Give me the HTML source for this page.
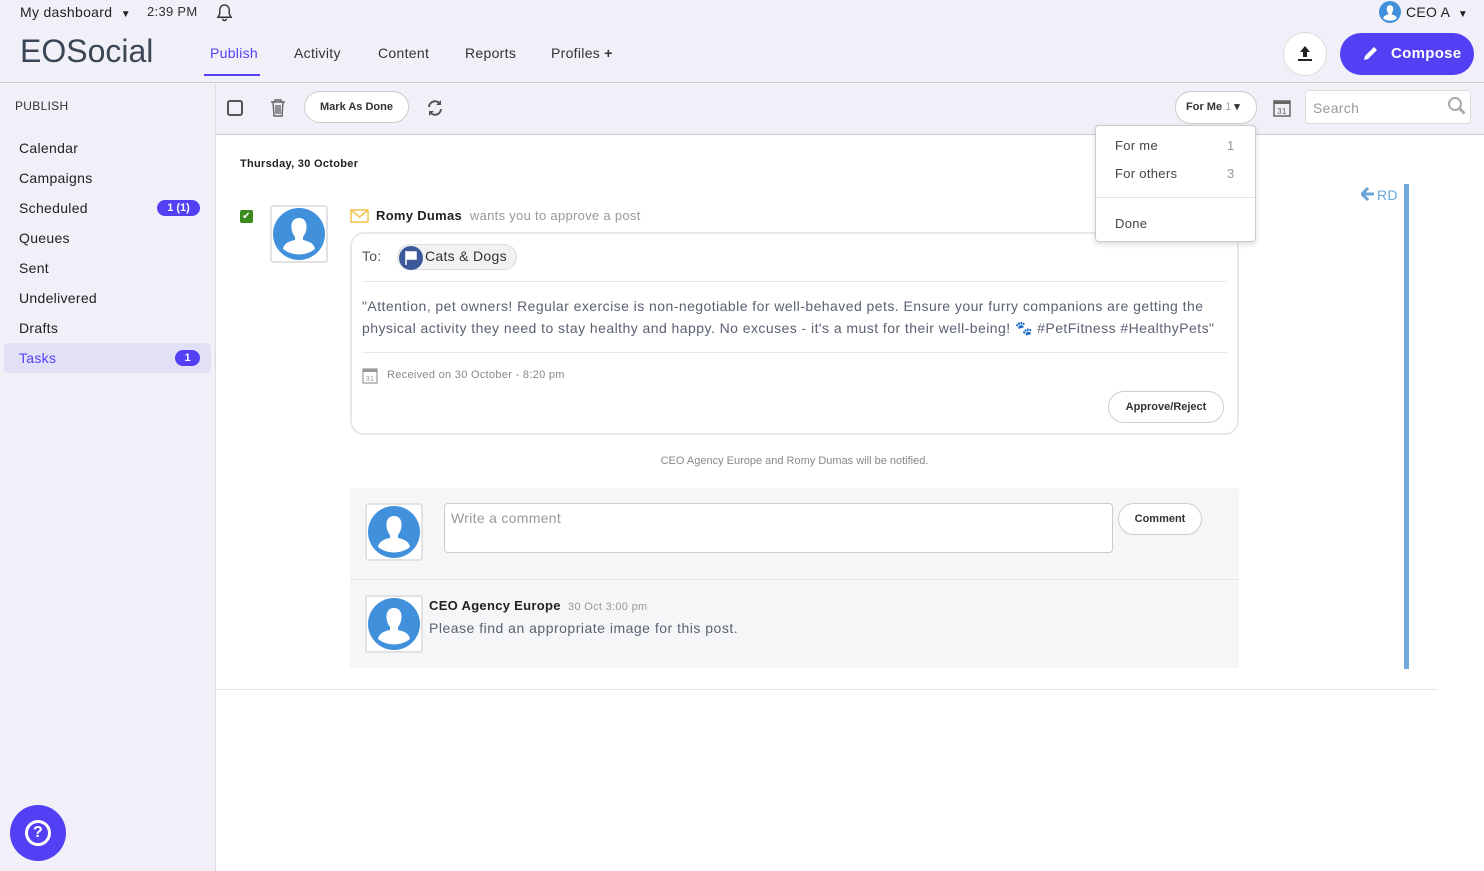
<!DOCTYPE html>
<html><head><meta charset="utf-8"><style>
*{box-sizing:border-box;margin:0;padding:0}
body{width:1484px;height:871px;overflow:hidden;font-family:"Liberation Sans",sans-serif;background:#f1f0f8;position:relative;color:#222;letter-spacing:0.3px}
.a{position:absolute}
.nav{font-size:14px;color:#333;top:45px}
.side div{position:absolute;left:19px;font-size:14px;color:#222}
.badge{position:absolute;background:#5340f5;color:#fff;font-size:11px;font-weight:bold;border-radius:9px;height:16px;line-height:16px;text-align:center;letter-spacing:0}
.av{position:absolute;width:58px;height:58px;border:2px solid #e2e2e2;border-radius:3px;background:#fff;display:flex;align-items:center;justify-content:center}
.btn{position:absolute;border:1px solid #ccc;border-radius:16px;background:#fff;font-size:12px;font-weight:bold;color:#333;text-align:center;letter-spacing:0}
</style></head><body>
<svg width="0" height="0" style="position:absolute"><defs><symbol id="av" viewBox="0 0 52 52"><circle cx="26" cy="26" r="26" fill="#4190dc"/><path d="M26 10c-6 0-8 5-7.5 10 .3 4 2 7 3.5 9v3c-5 1-11 3-12 9a26 26 0 0 0 32 0c-1-6-7-8-12-9v-3c1.5-2 3.2-5 3.5-9 .5-5-1.5-10-7.5-10z" fill="#fff"/></symbol></defs></svg>

<div class="a" style="left:20px;top:4px;font-size:14px;color:#222">My dashboard &nbsp;<span style="font-size:10px">▼</span></div>
<div class="a" style="left:147px;top:4px;font-size:13px;color:#333">2:39 PM</div>
<svg class="a" style="left:215px;top:3px" width="19" height="19" viewBox="0 0 20 20"><path d="M10 2c-3 0-5 2.5-5 5.5v4L3 15h14l-2-3.5v-4C15 4.5 13 2 10 2zM8 16.5a2 2 0 0 0 4 0" fill="none" stroke="#333" stroke-width="1.5"/></svg>
<div class="a" style="left:20px;top:33px;font-size:32px;color:#3a4656;letter-spacing:0">EOSocial</div>
<div class="a nav" style="left:210px;color:#5340f5">Publish</div>
<div class="a" style="left:204px;top:74px;width:56px;height:2px;background:#5340f5"></div>
<div class="a nav" style="left:294px">Activity</div>
<div class="a nav" style="left:378px">Content</div>
<div class="a nav" style="left:465px">Reports</div>
<div class="a nav" style="left:551px">Profiles <b>+</b></div>
<svg class="a" style="left:1379px;top:1px" width="22" height="22"><use href="#av"/></svg>
<div class="a" style="left:1406px;top:4px;font-size:14px;color:#222">CEO A &nbsp;<span style="font-size:10px">▼</span></div>
<div class="a" style="left:1283px;top:32px;width:44px;height:44px;border-radius:50%;background:#fff;border:1px solid #ddd"></div>
<svg class="a" style="left:1296px;top:44px" width="18" height="18" viewBox="0 0 18 18"><path d="M9 2l-5 6h3v5h4V8h3z M2 15h14v2H2z" fill="#222"/></svg>
<div class="a" style="left:1340px;top:33px;width:134px;height:42px;border-radius:21px;background:#5340f5;color:#fff;font-size:15px;font-weight:bold;line-height:42px;padding-left:51px">Compose</div>
<svg class="a" style="left:1362px;top:44px" width="18" height="18" viewBox="0 0 18 18"><path d="M2 16l1-4 9-9 3 3-9 9z" fill="#fff"/></svg>
<div class="a" style="left:0;top:82px;width:1484px;height:1px;background:#ccc"></div>

<div class="a" style="left:215px;top:83px;width:1px;height:788px;background:#ddd"></div>
<div class="a" style="left:15px;top:99px;font-size:12px;color:#333">PUBLISH</div>
<div class="side">
<div style="top:140px">Calendar</div><div style="top:170px">Campaigns</div><div style="top:200px">Scheduled</div>
<div style="top:230px">Queues</div><div style="top:260px">Sent</div><div style="top:290px">Undelivered</div><div style="top:320px">Drafts</div>
</div>
<div class="a" style="left:4px;top:343px;width:207px;height:30px;border-radius:4px;background:#e2e0f7"></div>
<div class="a" style="left:19px;top:350px;font-size:14px;color:#5340f5">Tasks</div>
<div class="badge" style="left:157px;top:200px;width:43px">1 (1)</div>
<div class="badge" style="left:175px;top:350px;width:25px">1</div>
<div class="a" style="left:10px;top:805px;width:56px;height:56px;border-radius:50%;background:#5340f5"></div>
<div class="a" style="left:25px;top:820px;width:26px;height:26px;border-radius:50%;border:3px solid #fff;color:#fff;font-weight:bold;font-size:16px;text-align:center;line-height:20px">?</div>

<div class="a" style="left:216px;top:134px;width:1268px;height:737px;background:#fff"></div>
<div class="a" style="left:216px;top:134px;width:1268px;height:1px;background:#ccc"></div>
<div class="a" style="left:227px;top:100px;width:16px;height:16px;border:2px solid #555;border-radius:3px"></div>
<svg class="a" style="left:269px;top:98px" width="18" height="20" viewBox="0 0 18 20"><path d="M2 4h14M6 4V2h6v2M4 4l1 14h8l1-14M7 7v9M9 7v9M11 7v9" fill="none" stroke="#666" stroke-width="1.4"/></svg>
<div class="btn" style="left:304px;top:91px;width:105px;height:32px;line-height:30px;font-size:11px">Mark As Done</div>
<svg class="a" style="left:425px;top:98px" width="20" height="20" viewBox="0 0 20 20"><path d="M4 9a6 6 0 0 1 11-3M16 11a6 6 0 0 1-11 3" fill="none" stroke="#555" stroke-width="2"/><path d="M16 2v5h-5zM4 18v-5h5z" fill="#555"/></svg>
<div class="btn" style="left:1175px;top:91px;width:82px;height:33px;line-height:31px;font-size:11px;text-align:left;padding-left:10px">For Me <span style="color:#aaa;font-weight:normal">1</span> ▾</div>
<svg class="a" style="left:1272px;top:98px" width="20" height="20" viewBox="0 0 20 20"><rect x="2" y="3" width="16" height="15" fill="none" stroke="#666" stroke-width="1.5"/><rect x="2" y="3" width="16" height="3" fill="#666"/><text x="10" y="16" font-size="8" text-anchor="middle" fill="#666" font-family="Liberation Sans">31</text></svg>
<div class="a" style="left:1305px;top:90px;width:166px;height:34px;border:1px solid #ddd;border-radius:4px;background:#fff;font-size:14px;color:#999;padding:9px 7px">Search</div>
<svg class="a" style="left:1447px;top:96px" width="20" height="20" viewBox="0 0 20 20"><circle cx="8" cy="8" r="6" fill="none" stroke="#aaa" stroke-width="2"/><path d="M12.5 12.5l5 5" stroke="#aaa" stroke-width="3"/></svg>

<div class="a" style="left:240px;top:158px;font-size:11px;font-weight:bold;color:#222">Thursday, 30 October</div>
<div class="a" style="left:240px;top:210px;width:13px;height:13px;background:#3a8a1e;border-radius:2px;color:#fff;font-size:10px;text-align:center;line-height:13px">✔</div>
<div class="av" style="left:270px;top:205px"><svg width="52" height="52"><use href="#av"/></svg></div>
<svg class="a" style="left:350px;top:209px" width="19" height="14" viewBox="0 0 19 14"><rect x="1" y="1" width="17" height="12" fill="none" stroke="#f3c24a" stroke-width="1.5"/><path d="M1 1l8.5 7L18 1" fill="none" stroke="#f3c24a" stroke-width="1.5"/></svg>
<div class="a" style="left:376px;top:208px;font-size:13px"><b>Romy Dumas</b> <span style="color:#999">&nbsp;wants you to approve a post</span></div>
<div class="a" style="left:350px;top:232px;width:889px;height:203px;border:2px solid #e6e8ee;border-radius:14px;background:#fff"></div>
<div class="a" style="left:362px;top:248px;font-size:14px;color:#555">To:</div>
<div class="a" style="left:397px;top:244px;width:120px;height:26px;border-radius:13px;background:#f2f2f4;border:1px solid #ddd"></div>
<div class="a" style="left:399px;top:246px;width:24px;height:24px;border-radius:50%;background:#3b5998"></div>
<svg class="a" style="left:404px;top:250px" width="14" height="16" viewBox="0 0 14 16"><path d="M2 1v14M2 2h10v7H2" fill="#fff" stroke="#fff" stroke-width="1.5"/></svg>
<div class="a" style="left:425px;top:248px;font-size:14px;color:#333">Cats &amp; Dogs</div>
<div class="a" style="left:362px;top:281px;width:865px;height:1px;background:#e6e8ee"></div>
<div class="a" style="left:362px;top:295px;width:870px;font-size:14px;line-height:22px;color:#5a6272;letter-spacing:0.45px">"Attention, pet owners! Regular exercise is non-negotiable for well-behaved pets. Ensure your furry companions are getting the physical activity they need to stay healthy and happy. No excuses - it's a must for their well-being! 🐾 #PetFitness #HealthyPets"</div>
<div class="a" style="left:362px;top:352px;width:865px;height:1px;background:#e6e8ee"></div>
<svg class="a" style="left:362px;top:367px" width="16" height="17" viewBox="0 0 16 17"><rect x="1" y="2" width="14" height="14" fill="none" stroke="#999" stroke-width="1.2"/><rect x="1" y="2" width="14" height="3" fill="#999"/><text x="8" y="14" font-size="7" text-anchor="middle" fill="#999" font-family="Liberation Sans">31</text></svg>
<div class="a" style="left:387px;top:369px;font-size:11px;color:#888">Received on 30 October - 8:20 pm</div>
<div class="btn" style="left:1108px;top:391px;width:116px;height:32px;line-height:30px;font-size:11px">Approve/Reject</div>
<div class="a" style="left:350px;top:455px;width:889px;text-align:center;font-size:11px;color:#888;letter-spacing:0">CEO Agency Europe and Romy Dumas will be notified.</div>

<div class="a" style="left:350px;top:488px;width:889px;height:180px;background:#f5f6f8;border-radius:3px"></div>
<div class="av" style="left:365px;top:503px"><svg width="52" height="52"><use href="#av"/></svg></div>
<div class="a" style="left:444px;top:503px;width:669px;height:50px;border:1px solid #ccc;border-radius:4px;background:#fff;font-size:14px;color:#999;padding:6px 6px">Write a comment</div>
<div class="btn" style="left:1118px;top:503px;width:84px;height:32px;line-height:30px;font-size:11px">Comment</div>
<div class="a" style="left:350px;top:579px;width:889px;height:1px;background:#e6e6ea"></div>
<div class="av" style="left:365px;top:595px"><svg width="52" height="52"><use href="#av"/></svg></div>
<div class="a" style="left:429px;top:598px;font-size:13px"><b>CEO Agency Europe</b> <span style="font-size:11px;color:#999">&nbsp;30 Oct 3:00 pm</span></div>
<div class="a" style="left:429px;top:620px;font-size:14px;color:#5a6272;letter-spacing:0.5px">Please find an appropriate image for this post.</div>
<div class="a" style="left:216px;top:689px;width:1222px;height:1px;background:#e6e6ea"></div>

<svg class="a" style="left:1361px;top:187px" width="14" height="14" viewBox="0 0 14 14"><path d="M7 1L1 7l6 6M1 7h12" fill="none" stroke="#6aa5d8" stroke-width="3"/></svg>
<div class="a" style="left:1377px;top:187px;font-size:14px;color:#6aa5d8">RD</div>
<div class="a" style="left:1404px;top:184px;width:5px;height:485px;background:#72a9dc"></div>

<div class="a" style="left:1095px;top:125px;width:161px;height:117px;background:#fff;border:1px solid #ccc;border-radius:4px;box-shadow:0 2px 6px rgba(0,0,0,.15)"></div>
<div class="a" style="left:1115px;top:138px;font-size:13px;color:#444">For me</div><div class="a" style="left:1227px;top:138px;font-size:13px;color:#999">1</div>
<div class="a" style="left:1115px;top:166px;font-size:13px;color:#444">For others</div><div class="a" style="left:1227px;top:166px;font-size:13px;color:#999">3</div>
<div class="a" style="left:1096px;top:197px;width:159px;height:1px;background:#e4e4e4"></div>
<div class="a" style="left:1115px;top:216px;font-size:13px;color:#444">Done</div>
</body></html>
